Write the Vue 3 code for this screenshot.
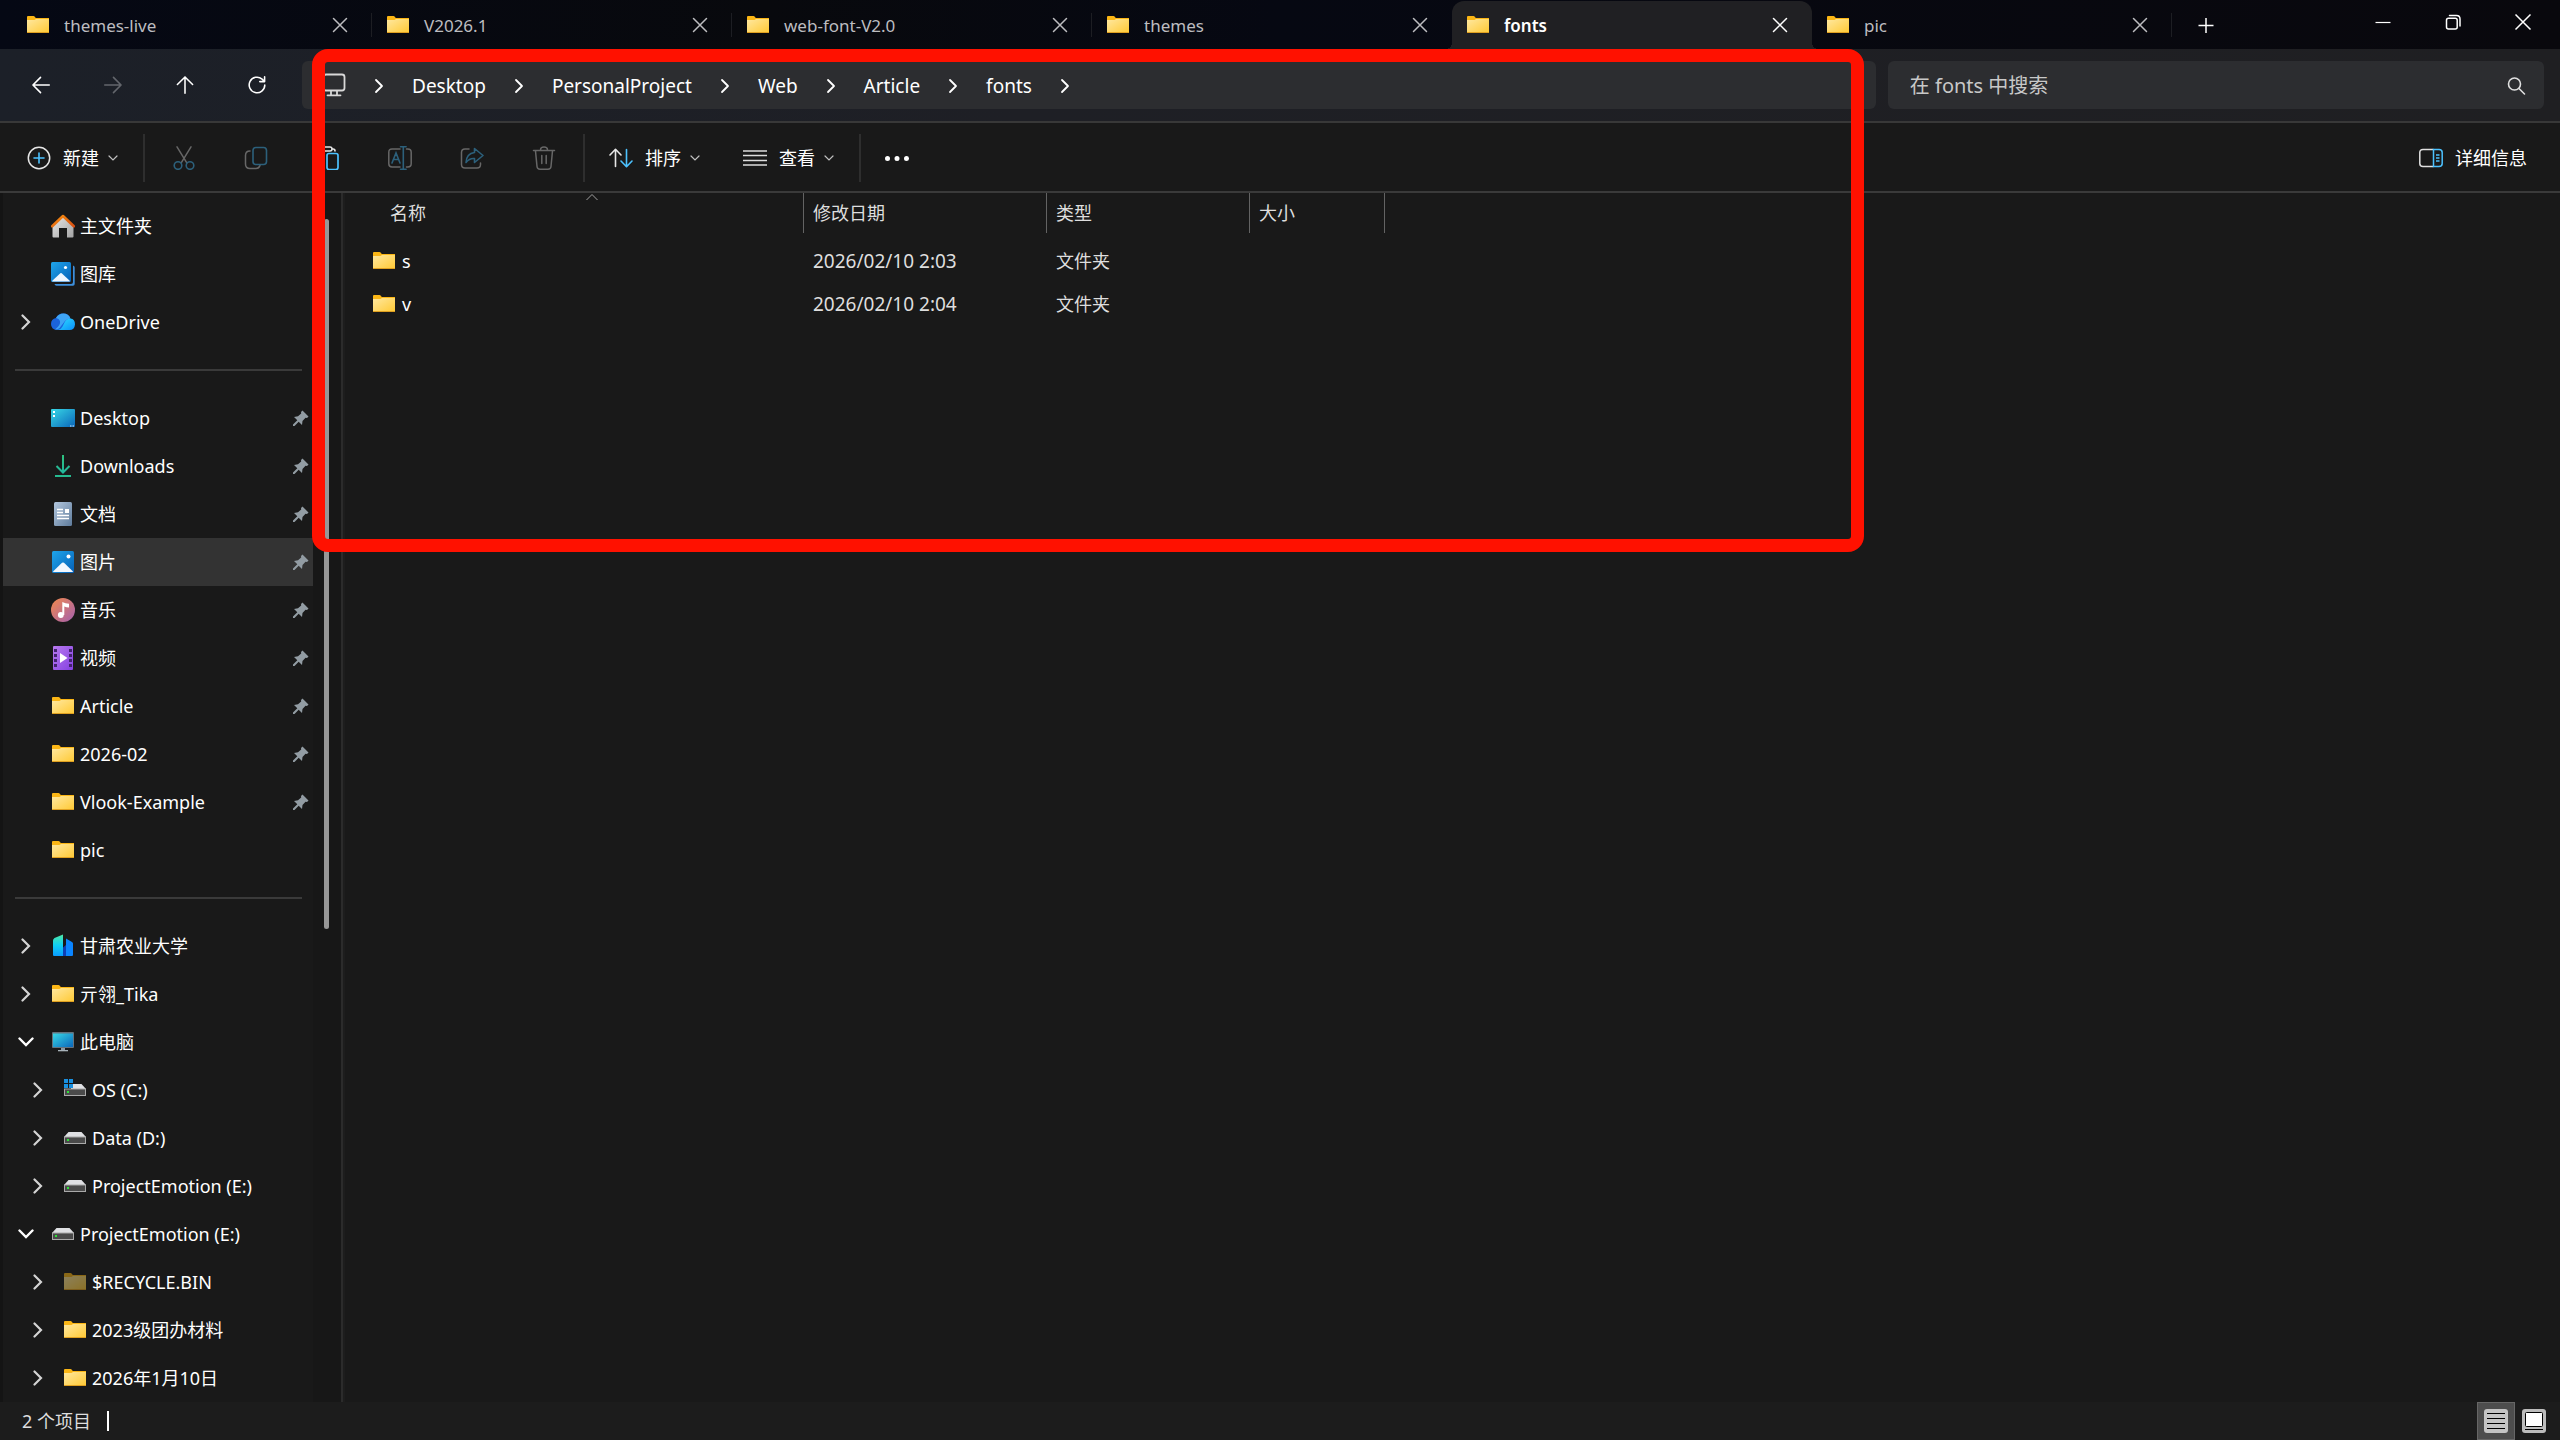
<script setup>
    import { ref } from 'vue';

    const tabs = ref([
        { id: 1, title: 'themes-live' },
        { id: 2, title: 'V2026.1' },
        { id: 3, title: 'web-font-V2.0' },
        { id: 4, title: 'themes' },
        { id: 5, title: 'fonts' },
        { id: 6, title: 'pic' }
    ]);
    const activeTab = ref(5);

    const navButtons = [
        { icon: 'back', label: '后退' },
        { icon: 'forward', label: '前进', disabled: true },
        { icon: 'up', label: '向上' },
        { icon: 'refresh', label: '刷新' }
    ];

    const windowButtons = [
        { icon: 'minimize', label: '最小化' },
        { icon: 'restore', label: '还原' },
        { icon: 'window-close', label: '关闭' }
    ];

    const crumbs = ['Desktop', 'PersonalProject', 'Web', 'Article', 'fonts'];

    const fileActions = [
        { icon: 'cut', label: '剪切', disabled: true },
        { icon: 'copy', label: '复制', disabled: true },
        { icon: 'paste', label: '粘贴', disabled: false },
        { icon: 'rename', label: '重命名', disabled: true },
        { icon: 'share', label: '共享', disabled: true },
        { icon: 'trash', label: '删除', disabled: true }
    ];

    const sections = [
        [
            { name: '主文件夹', icon: 'home' },
            { name: '图库', icon: 'gallery' },
            { name: 'OneDrive', icon: 'cloud', arrow: 'right' }
        ],
        [
            { name: 'Desktop', icon: 'desktop', pinned: true },
            { name: 'Downloads', icon: 'download', pinned: true },
            { name: '文档', icon: 'document', pinned: true },
            { name: '图片', icon: 'picture', pinned: true, selected: true },
            { name: '音乐', icon: 'music', pinned: true },
            { name: '视频', icon: 'video', pinned: true },
            { name: 'Article', icon: 'folder', pinned: true },
            { name: '2026-02', icon: 'folder', pinned: true },
            { name: 'Vlook-Example', icon: 'folder', pinned: true },
            { name: 'pic', icon: 'folder' }
        ],
        [
            { name: '甘肃农业大学', icon: 'building', arrow: 'right' },
            { name: '亓翎_Tika', icon: 'folder', arrow: 'right' },
            { name: '此电脑', icon: 'computer', arrow: 'down' },
            { name: 'OS (C:)', icon: 'drive-os', arrow: 'right', nested: true },
            { name: 'Data (D:)', icon: 'drive', arrow: 'right', nested: true },
            { name: 'ProjectEmotion (E:)', icon: 'drive', arrow: 'right', nested: true },
            { name: 'ProjectEmotion (E:)', icon: 'drive', arrow: 'down' },
            { name: '$RECYCLE.BIN', icon: 'folder', arrow: 'right', nested: true, hidden: true },
            { name: '2023级团办材料', icon: 'folder', arrow: 'right', nested: true },
            { name: '2026年1月10日', icon: 'folder', arrow: 'right', nested: true }
        ]
    ];

    const files = [
        { name: 's', date: '2026/02/10 2:03', type: '文件夹', size: '' },
        { name: 'v', date: '2026/02/10 2:04', type: '文件夹', size: '' }
    ];

    const search = ref('');

    function closeTab(id) {
        tabs.value = tabs.value.filter(tab => tab.id !== id);
    }
</script>

<template>
    <!-- icon sprite -->
    <svg class="sprite" aria-hidden="true">
        <defs>
            <linearGradient id="g-folder" x1="0" y1="0" x2="1" y2="1"><stop offset="0" stop-color="#ffe8a0" /><stop offset="1" stop-color="#ffc933" /></linearGradient>
            <linearGradient id="g-roof" x1="0" y1="0" x2="1" y2="1"><stop offset="0" stop-color="#f7900f" /><stop offset="1" stop-color="#d94f12" /></linearGradient>
            <linearGradient id="g-wall" x1="0" y1="0" x2="1" y2="1"><stop offset="0" stop-color="#e8e8e8" /><stop offset="1" stop-color="#a4a4a4" /></linearGradient>
            <linearGradient id="g-blue" x1="0" y1="0" x2="1" y2="1"><stop offset="0" stop-color="#1fa5ea" /><stop offset="1" stop-color="#0560b8" /></linearGradient>
            <linearGradient id="g-desk" x1="0" y1="0" x2="1" y2="1"><stop offset="0" stop-color="#38d8e6" /><stop offset="1" stop-color="#0a66ba" /></linearGradient>
            <linearGradient id="g-doc" x1="0" y1="0" x2="1" y2="1"><stop offset="0" stop-color="#b3c7de" /><stop offset="1" stop-color="#5e7b9b" /></linearGradient>
            <linearGradient id="g-music" x1="0" y1="0" x2="1" y2="1"><stop offset="0" stop-color="#f2894c" /><stop offset="1" stop-color="#a35fb0" /></linearGradient>
            <linearGradient id="g-video" x1="0" y1="0" x2="1" y2="1"><stop offset="0" stop-color="#b87af0" /><stop offset="1" stop-color="#8440e0" /></linearGradient>
            <linearGradient id="g-cloud" x1="0" y1="0" x2="1" y2="1"><stop offset="0" stop-color="#2fe0ff" /><stop offset="1" stop-color="#0a8dfa" /></linearGradient>
            <linearGradient id="g-build" x1="0" y1="0" x2="0" y2="1"><stop offset="0" stop-color="#4fe8a4" /><stop offset="0.5" stop-color="#0fd0f5" /><stop offset="1" stop-color="#0a9cff" /></linearGradient>
            <linearGradient id="g-down" x1="0" y1="0" x2="0" y2="24" gradientUnits="userSpaceOnUse"><stop offset="0" stop-color="#2fc27c" /><stop offset="1" stop-color="#1fb3a6" /></linearGradient>
        </defs>

        <symbol id="i-folder" viewBox="0 0 24 24">
            <path d="M1 4q0-1 1-1h5.500q.8 0 1.300.7L9.800 5H23v4H1z" fill="#fbb615" />
            <path d="M1 7h7.500L10 6h13v13.500q0 .5-.5.500h-21q-.5 0-.5-.5z" fill="url(#g-folder)" />
            <path d="M1 19.500h22" stroke="#e0a020" stroke-width="1" />
        </symbol>
        <symbol id="i-home" viewBox="0 0 24 24">
            <path d="M1.500 12 12 2l10.500 10v10.500q0 1-1 1H16V14H8v9.500H2.500q-1 0-1-1z" fill="url(#g-wall)" />
            <path d="M1.200 12.300 12 2l10.800 10.300" fill="none" stroke="url(#g-roof)" stroke-width="2.600" stroke-linejoin="round" stroke-linecap="round" />
        </symbol>
        <symbol id="i-gallery" viewBox="0 0 24 24">
            <path d="M22 3.500q1.700.3 1.700 2V22q0 1.700-1.700 1.700H5.500q-1.700 0-2-1.700H20q2 0 2-2z" fill="#3d8fdc" />
            <rect width="20" height="20" rx="1.500" fill="url(#g-blue)" />
            <path d="m1 19 8.300-7.800q.7-.6 1.400 0L19 19q-.3.500-1 .5H2q-.7 0-1-.5z" fill="#eef6ff" />
            <circle cx="14.500" cy="5.500" r="1.600" fill="#fff" />
        </symbol>
        <symbol id="i-cloud" viewBox="0 0 24 24">
            <path d="M6 20q-6-.5-6-6 0-5 5-6 2-4.500 7-4.500 5.500 0 7.500 5L9 20z" fill="#1b63dc" />
            <path d="M5 8q2.500-4.500 7.500-4.500 5 0 7 5-3.500 0-5.500 2.500L8.500 18Q6 20 4 19.500 10 15 9 11 8 8.500 5 8z" fill="#3ea4f5" />
            <path d="M7 20q3-.5 4.500-3.500l2-4q2-4 6-4 4.500.5 4.500 6-.5 5.500-5.500 5.500z" fill="url(#g-cloud)" />
        </symbol>
        <symbol id="i-desktop" viewBox="0 0 24 24">
            <rect y="3" width="24" height="18" rx="1" fill="url(#g-desk)" />
            <path d="M2 5h2v2H2zm0 4h2v2H2z" fill="#fff" />
            <path d="M19 20h1.500m1 0H23" stroke="#d6e8ff" />
        </symbol>
        <symbol id="i-download" viewBox="0 0 24 24">
            <path d="M12 1v17M5.500 12 12 18.500 18.500 12" fill="none" stroke="url(#g-down)" stroke-width="2" />
            <path d="M4 21h16v2H4z" fill="#25bb90" />
        </symbol>
        <symbol id="i-document" viewBox="0 0 24 24">
            <rect x="3" width="18" height="24" rx="1.500" fill="url(#g-doc)" />
            <path d="M6 7.500h6M6 10.500h6M6 13.500h12M6 16.500h12" stroke="#fff" stroke-width="1.300" />
            <path d="M14 7h4v4h-4z" fill="#fff" />
        </symbol>
        <symbol id="i-picture" viewBox="0 0 24 24">
            <rect x="1" y="1" width="22" height="22" rx="1.500" fill="url(#g-blue)" />
            <path d="m2 21.500 9-8.700q1-.8 2 0l9 8.700q-.3.600-1 .6H3q-.7 0-1-.6z" fill="#f2f8ff" />
            <circle cx="17.500" cy="6.500" r="2" fill="#fff" />
        </symbol>
        <symbol id="i-music" viewBox="0 0 24 24">
            <circle cx="12" cy="12" r="12" fill="url(#g-music)" />
            <circle cx="9.800" cy="17" r="2.900" fill="#fff" />
            <path d="M11.300 4q3.200 1.500 6.700 1.700V9.500q-2.500 0-4.700-1V17h-2z" fill="#fff" />
        </symbol>
        <symbol id="i-video" viewBox="0 0 24 24">
            <rect x="2" width="20" height="24" rx="1" fill="url(#g-video)" />
            <path d="M3 3h3v3H3zm0 5h3v3H3zm0 5h3v3H3zm0 5h3v3H3zM18 3h3v3h-3zm0 5h3v3h-3zm0 5h3v3h-3zm0 5h3v3h-3z" fill="#43236e" />
            <path d="M9 7v10l7.500-5z" fill="#fff" />
        </symbol>
        <symbol id="i-building" viewBox="0 0 24 24">
            <path d="M12 13.500 15 11v11h-3z" fill="#0c3fb5" />
            <path d="M15 4.500 21 8q1 .5 1 1.500V21q0 1-1 1h-6z" fill="#0a84ff" />
            <path d="M2 6.500Q2 5 3.500 4L12 .5V22H3q-1 0-1-1z" fill="url(#g-build)" />
        </symbol>
        <symbol id="i-computer" viewBox="0 0 24 24">
            <rect x="1" y="2" width="22" height="16" rx="1" fill="#65727c" />
            <rect x="2" y="3.500" width="20" height="13.500" fill="url(#g-desk)" />
            <path d="M10 18h4v2h-4z" fill="#8b98a2" />
            <path d="M7 20h10v1.300H7z" fill="#a8b3ba" />
        </symbol>
        <symbol id="i-drive" viewBox="0 0 24 24">
            <path d="M5.500 6h13L23 11H1z" fill="#dfe0e3" />
            <rect x="1" y="10.500" width="22" height="7.500" fill="#a9a9a9" />
            <rect x="2" y="11.500" width="20" height="5.500" fill="#4a4a4a" />
            <path d="M4 13h2v2H4z" fill="#2ce336" />
        </symbol>
        <symbol id="i-drive-os" viewBox="0 0 24 24">
            <path d="M8 6h10.500L23 11H8z" fill="#dfe0e3" />
            <rect x="1" y="10.500" width="22" height="7.500" fill="#a9a9a9" />
            <rect x="2" y="11.500" width="20" height="5.500" fill="#4a4a4a" />
            <path d="M4 13h2v2H4z" fill="#2ce336" />
            <path d="M1 1h4v4H1zm5 0h4v4H6zM1 6h4v4H1zm5 0h4v4H6z" fill="#1990e0" />
        </symbol>
        <symbol id="i-pin" viewBox="0 0 16 16">
            <path d="M9.500.5 15.500 6.500 14 8l-1.500-.2L9.500 11l-.5 4-3.300-3.300L1.500 16 0 16v-1.500l4.300-4.200L1 7l4-.7L8.200 3.500 8 2z" fill="#929ca3" />
        </symbol>

        <symbol id="i-right" viewBox="0 0 16 16"><path d="m4.500 1.500 6.500 6.500-6.500 6.500" fill="none" stroke="currentColor" stroke-width="2.200" stroke-linecap="round" /></symbol>
        <symbol id="i-down" viewBox="0 0 16 16"><path d="m1.500 4.500 6.500 6.500 6.500-6.500" fill="none" stroke="currentColor" stroke-width="2.400" stroke-linecap="round" /></symbol>
        <symbol id="i-crumb" viewBox="0 0 24 24"><path d="m9 7 6 6-6 6" fill="none" stroke="currentColor" stroke-width="1.800" stroke-linecap="round" stroke-linejoin="round" /></symbol>
        <symbol id="i-chevron" viewBox="0 0 12 12"><path d="m2 4 4 4 4-4" fill="none" stroke="currentColor" stroke-width="1.200" stroke-linecap="round" /></symbol>
        <symbol id="i-sorted" viewBox="0 0 12 8"><path d="m.5 7 5.500-5.500 5.500 5.500" fill="none" stroke="currentColor" /></symbol>

        <symbol id="i-close" viewBox="0 0 24 24"><path d="m5.500 5.500 13 13m0-13-13 13" stroke="currentColor" stroke-width="1.500" stroke-linecap="round" /></symbol>
        <symbol id="i-add" viewBox="0 0 24 24"><path d="M12 5v15M4.500 12.500h15" stroke="currentColor" stroke-width="1.500" /></symbol>
        <symbol id="i-minimize" viewBox="0 0 24 24"><path d="M4.500 12.500h15" stroke="currentColor" stroke-width="1.200" /></symbol>
        <symbol id="i-restore" viewBox="0 0 24 24"><path d="M7.500 8.300h6.700q2 0 2 2v6.700q0 2-2 2H7.500q-2 0-2-2v-6.700q0-2 2-2zM8.500 5.500h7q3.500 0 3.500 3.500v7" fill="none" stroke="currentColor" stroke-width="1.500" stroke-linecap="round" /></symbol>
        <symbol id="i-window-close" viewBox="0 0 24 24"><path d="m4.500 4.500 15 15m0-15-15 15" stroke="currentColor" stroke-width="1.500" /></symbol>

        <symbol id="i-back" viewBox="0 0 24 24"><path d="M21 12H3.500m8-8.300L3.200 12l8.300 8.300" fill="none" stroke="currentColor" stroke-width="1.700" stroke-linecap="round" stroke-linejoin="round" /></symbol>
        <symbol id="i-forward" viewBox="0 0 24 24"><path d="M3 12h17.500m-8-8.300 8.300 8.300-8.300 8.300" fill="none" stroke="currentColor" stroke-width="1.700" stroke-linecap="round" stroke-linejoin="round" /></symbol>
        <symbol id="i-up" viewBox="0 0 24 24"><path d="M12 21V3.500m-8.300 8L12 3.200l8.300 8.300" fill="none" stroke="currentColor" stroke-width="1.700" stroke-linecap="round" stroke-linejoin="round" /></symbol>
        <symbol id="i-refresh" viewBox="0 0 24 24"><path d="M20.500 12a8.500 8.500 0 1 1-3-6.500l2.500 2.500M20.300 3v5.300H15" fill="none" stroke="currentColor" stroke-width="1.700" stroke-linecap="round" stroke-linejoin="round" /></symbol>
        <symbol id="i-monitor" viewBox="0 0 24 24"><path d="M4 1.500h16q2.500 0 2.500 2.500v11q0 2.500-2.500 2.500H4q-2.500 0-2.500-2.500V4q0-2.500 2.500-2.500zM9 18v4m6-4v4M5.500 22.300h13" fill="none" stroke="currentColor" stroke-width="1.800" stroke-linecap="round" /></symbol>
        <symbol id="i-search" viewBox="0 0 24 24"><path d="M16.500 11a6 6 0 1 1-12 0 6 6 0 1 1 12 0zM15 15.500l5.500 5.500" fill="none" stroke="currentColor" stroke-width="1.600" stroke-linecap="round" /></symbol>

        <symbol id="i-new" viewBox="0 0 24 24">
            <circle cx="12" cy="12" r="10.700" fill="none" stroke="#e6e6e6" stroke-width="1.500" />
            <path d="M12 7v10M7 12h10" stroke="#4cc2ff" stroke-width="1.600" stroke-linecap="round" />
        </symbol>
        <symbol id="i-cut" viewBox="0 0 24 24">
            <path d="m5 .8 9.800 16M19 .8 9.200 16.800" fill="none" stroke="#676767" stroke-width="1.500" stroke-linecap="round" />
            <path d="M9.800 19.500a3.800 3.800 0 1 1-7.600 0 3.800 3.800 0 1 1 7.600 0zm12 0a3.800 3.800 0 1 1-7.600 0 3.800 3.800 0 1 1 7.600 0z" fill="none" stroke="#2c607b" stroke-width="1.600" />
        </symbol>
        <symbol id="i-copy" viewBox="0 0 24 24">
            <path d="M6 5Q1.500 5 1.500 9.500V18q0 4.500 4.500 4.500h6q3 0 4-3" fill="none" stroke="#676767" stroke-width="1.500" stroke-linecap="round" />
            <rect x="9" y="1.500" width="13.500" height="17" rx="3" fill="none" stroke="#2c607b" stroke-width="1.600" />
        </symbol>
        <symbol id="i-paste" viewBox="0 0 24 24">
            <path d="M7 3H4Q2 3 2 5v15q0 2 2 2h4M16 3h1q2 0 2 2" fill="none" stroke="#e6e6e6" stroke-width="1.600" stroke-linecap="round" />
            <rect x="7" y="1" width="9" height="4" rx="2" fill="none" stroke="#e6e6e6" stroke-width="1.500" />
            <rect x="11" y="7.500" width="11" height="16" rx="2" fill="none" stroke="#4cc2ff" stroke-width="1.700" />
        </symbol>
        <symbol id="i-rename" viewBox="0 0 24 24">
            <path d="M12 3H4Q.8 3 .8 6.200v11.600Q.8 21 4 21h8M18.500 3h1.300q3.400 0 3.400 3.200v11.600q0 3.200-3.400 3.200h-1.300" fill="none" stroke="#676767" stroke-width="1.500" stroke-linecap="round" />
            <path d="M15.300 1v22M12.500.8h5.600M12.500 23.200h5.600M4 17 8 7l4 10M5.300 13.500h5.400" fill="none" stroke="#2c607b" stroke-width="1.600" stroke-linecap="round" />
        </symbol>
        <symbol id="i-share" viewBox="0 0 24 24">
            <path d="M9 3H5Q1.500 3 1.500 6.500v12Q1.500 22 5 22h12q3.500 0 3.500-3.500V17" fill="none" stroke="#676767" stroke-width="1.500" stroke-linecap="round" />
            <path d="M14.500 2.500 23 9.500l-8.500 7V12.500q-5-.5-8.500 4Q6.500 7.500 14.500 6.500z" fill="none" stroke="#2c607b" stroke-width="1.600" stroke-linejoin="round" />
        </symbol>
        <symbol id="i-trash" viewBox="0 0 24 24">
            <path d="M1.500 4.500h21M8.500 4q0-3 3.500-3t3.500 3M3.500 5l1.500 15.500q.3 2.700 3 2.700h8q2.700 0 3-2.700L20.500 5M9.800 9.500v8m4.400-8v8" fill="none" stroke="#676767" stroke-width="1.500" stroke-linecap="round" />
        </symbol>
        <symbol id="i-sort" viewBox="0 0 24 24">
            <path d="M6.500 20.500V3.500M1 9l5.500-5.700L12 9" fill="none" stroke="#e6e6e6" stroke-width="1.600" stroke-linecap="round" stroke-linejoin="round" />
            <path d="M17.500 3.500v17M12 15l5.500 5.700L23 15" fill="none" stroke="#4cc2ff" stroke-width="1.600" stroke-linecap="round" stroke-linejoin="round" />
        </symbol>
        <symbol id="i-view" viewBox="0 0 24 24"><path d="M0 5h24M0 9.500h24M0 14.500h24M0 19h24" stroke="#dcdcdc" stroke-width="1.400" /></symbol>
        <symbol id="i-more" viewBox="0 0 24 24"><path d="M2.500 12.500h.01M12 12.500h.01M21.500 12.500h.01" stroke="#fff" stroke-width="5" stroke-linecap="round" /></symbol>
        <symbol id="i-details" viewBox="0 0 24 24">
            <path d="M14.500 3.500H4Q.8 3.500.8 6.500v11q0 3 3.200 3h10.500" fill="none" stroke="#e0e0e0" stroke-width="1.500" />
            <path d="M14.500 3.500H20q3.200 0 3.200 3v11q0 3-3.200 3h-5.500zM17 9h3.500M17 12h3.500M17 15h3.500" fill="none" stroke="#4cc2ff" stroke-width="1.500" />
        </symbol>
        <symbol id="i-list-mode" viewBox="0 0 24 24">
            <rect width="24" height="24" rx="3" fill="#c4c4c4" />
            <path d="M3 4.500h18M3 9.500h18M3 14.500h18M3 19.500h18" stroke="#000" />
        </symbol>
        <symbol id="i-thumb-mode" viewBox="0 0 24 24">
            <rect width="24" height="24" rx="3" fill="#bcbcbc" />
            <rect x="3.500" y="3.500" width="17" height="14" rx="1" fill="#fff" stroke="#000" />
            <path d="M3 20.500h18" stroke="#000" />
        </symbol>
    </svg>

    <div class="explorer">
        <header class="titlebar">
            <div v-for="tab in tabs" :key="tab.id" class="tab" :class="{ 'tab--active': tab.id === activeTab }">
                <button class="tab__select" @click="activeTab = tab.id">
                    <svg class="icon"><use href="#i-folder" /></svg>
                    <span>{{ tab.title }}</span>
                </button>
                <button class="tab__close" aria-label="关闭标签页" @click="closeTab(tab.id)">
                    <svg class="icon"><use href="#i-close" /></svg>
                </button>
            </div>
            <button class="titlebar__add" aria-label="添加新标签页">
                <svg class="icon"><use href="#i-add" /></svg>
            </button>
            <div class="window-buttons">
                <button v-for="item in windowButtons" :key="item.icon" :aria-label="item.label">
                    <svg class="icon"><use :href="'#i-' + item.icon" /></svg>
                </button>
            </div>
        </header>

        <div class="navbar">
            <div class="navbar__buttons">
                <button v-for="item in navButtons" :key="item.icon" :aria-label="item.label" :disabled="item.disabled">
                    <svg class="icon icon--nav"><use :href="'#i-' + item.icon" /></svg>
                </button>
            </div>
            <nav class="address">
                <svg class="icon address__root"><use href="#i-monitor" /></svg>
                <svg class="icon"><use href="#i-crumb" /></svg>
                <template v-for="crumb in crumbs" :key="crumb">
                    <a href="#">{{ crumb }}</a>
                    <svg class="icon"><use href="#i-crumb" /></svg>
                </template>
            </nav>
            <label class="search">
                <input v-model="search" type="text" placeholder="在 fonts 中搜索" aria-label="搜索">
                <svg class="icon"><use href="#i-search" /></svg>
            </label>
        </div>

        <div class="toolbar">
            <button class="toolbar__button">
                <svg class="icon"><use href="#i-new" /></svg>
                <span>新建</span>
                <svg class="chevron"><use href="#i-chevron" /></svg>
            </button>
            <i class="toolbar__line"></i>
            <button v-for="item in fileActions" :key="item.icon" class="toolbar__icon" :aria-label="item.label" :disabled="item.disabled">
                <svg class="icon"><use :href="'#i-' + item.icon" /></svg>
            </button>
            <i class="toolbar__line"></i>
            <button class="toolbar__button">
                <svg class="icon"><use href="#i-sort" /></svg>
                <span>排序</span>
                <svg class="chevron"><use href="#i-chevron" /></svg>
            </button>
            <button class="toolbar__button">
                <svg class="icon"><use href="#i-view" /></svg>
                <span>查看</span>
                <svg class="chevron"><use href="#i-chevron" /></svg>
            </button>
            <i class="toolbar__line"></i>
            <button class="toolbar__button" aria-label="查看更多">
                <svg class="icon"><use href="#i-more" /></svg>
            </button>
            <button class="toolbar__button toolbar__button--details">
                <svg class="icon"><use href="#i-details" /></svg>
                <span>详细信息</span>
            </button>
        </div>

        <div class="content">
            <aside class="sidebar">
                <nav class="tree">
                    <ul v-for="(section, index) in sections" :key="index" class="tree__section">
                        <li v-for="item in section" :key="item.name + item.nested">
                            <a href="#" class="tree__item" :class="{ 'tree__item--selected': item.selected, 'tree__item--nested': item.nested }">
                                <svg class="tree__arrow" :class="{ 'tree__arrow--open': item.arrow === 'down' }">
                                    <use v-if="item.arrow" :href="'#i-' + item.arrow" />
                                </svg>
                                <svg class="icon" :class="{ 'icon--faded': item.hidden }"><use :href="'#i-' + item.icon" /></svg>
                                <span class="tree__name">{{ item.name }}</span>
                                <svg v-if="item.pinned" class="tree__pin"><use href="#i-pin" /></svg>
                            </a>
                        </li>
                    </ul>
                </nav>
                <div class="scrollbar"><div class="scrollbar__thumb"></div></div>
            </aside>

            <main class="files">
                <table>
                    <colgroup>
                        <col class="col-name">
                        <col class="col-date">
                        <col class="col-type">
                        <col class="col-size">
                    </colgroup>
                    <thead>
                        <tr>
                            <th>
                                <div class="head head--name">
                                    名称
                                    <svg class="head__sorted"><use href="#i-sorted" /></svg>
                                </div>
                            </th>
                            <th><div class="head">修改日期</div></th>
                            <th><div class="head">类型</div></th>
                            <th><div class="head">大小</div></th>
                        </tr>
                    </thead>
                    <tbody>
                        <tr v-for="file in files" :key="file.name">
                            <td>
                                <div class="file">
                                    <svg class="icon"><use href="#i-folder" /></svg>
                                    <span>{{ file.name }}</span>
                                </div>
                            </td>
                            <td class="files__date">{{ file.date }}</td>
                            <td>{{ file.type }}</td>
                            <td>{{ file.size }}</td>
                        </tr>
                    </tbody>
                </table>
            </main>
        </div>

        <footer class="status">
            <span>2 个项目</span>
            <i class="status__line"></i>
            <div class="status__modes">
                <button class="status__mode status__mode--active" aria-label="详细信息视图">
                    <svg class="icon"><use href="#i-list-mode" /></svg>
                </button>
                <button class="status__mode" aria-label="大缩略图视图">
                    <svg class="icon"><use href="#i-thumb-mode" /></svg>
                </button>
            </div>
        </footer>

        <div class="marker"></div>
    </div>
</template>

<style>
    body {
        background: #191919;
    }
</style>

<style scoped>
    .sprite {
        position: absolute;
        width: 0;
        height: 0;
    }

    .explorer {
        position: relative;
        display: flex;
        flex-direction: column;
        min-height: 100vh;
        background: #191919;
        color: #fff;
        font: 18px/24px 'Noto Sans', 'Noto Sans CJK SC', sans-serif;
    }

    button {
        display: flex;
        align-items: center;
        justify-content: center;
        padding: 0;
        border: 0;
        background: none;
        color: inherit;
        font: inherit;
    }

    a {
        color: inherit;
        text-decoration: none;
    }

    svg {
        flex: none;
        display: block;
    }

    .icon {
        width: 24px;
        height: 24px;
    }

    .icon--nav {
        width: 22px;
        height: 22px;
    }

    .icon--faded {
        opacity: 0.5;
    }

    .chevron {
        width: 12px;
        height: 12px;
        color: #c0c0c0;
    }

    /* title bar */
    .titlebar {
        display: flex;
        height: 49px;
        padding: 0 2px 0 12px;
        background: linear-gradient(90deg, #050814, #08090d 30%, #060812 50%, #09080d);
    }

    .tab {
        position: relative;
        display: flex;
        flex: 0 1 360px;
        box-sizing: border-box;
        margin-top: 1px;
        padding: 0 20px 0 14px;
        color: #bdbdc0;
        font-size: 17px;
    }

    .tab::after {
        content: '';
        align-self: center;
        position: absolute;
        right: 0;
        width: 1px;
        height: 24px;
        background: #1d1e23;
    }

    .tab:has(+ .tab--active)::after {
        display: none;
    }

    .tab--active {
        border-radius: 12px 12px 0 0;
        background: #202023;
        color: #fff;
        font-weight: 600;
    }

    /* flared feet of the active tab */
    .tab--active::before,
    .tab--active::after {
        content: '';
        position: absolute;
        bottom: 0;
        width: 6px;
        height: 6px;
    }

    .tab--active::before {
        right: 100%;
        background: radial-gradient(circle at 0 0, transparent 6px, #202023 6px);
    }

    .tab--active::after {
        right: auto;
        left: 100%;
        align-self: auto;
        background: radial-gradient(circle at 100% 0, transparent 6px, #202023 6px);
    }

    .tab__select {
        flex: 1;
        justify-content: flex-start;
        gap: 14px;
        min-width: 0;
    }

    .tab__select span {
        padding-top: 2px;
    }

    .titlebar__add {
        width: 68px;
    }

    .window-buttons {
        display: flex;
        margin-left: auto;
        height: 43px;
    }

    .window-buttons button {
        width: 70px;
    }

    /* navigation */
    .navbar {
        display: grid;
        grid-template-columns: auto 29fr 12fr;
        align-items: center;
        height: 72px;
        padding: 0 16px 0 5px;
        border-bottom: 2px solid #383838;
        background: linear-gradient(90deg, #1c2028, #1e1f25 40%, #1f1f22);
    }

    .navbar__buttons {
        display: flex;
        margin-right: 9px;
    }

    .navbar__buttons button {
        width: 72px;
        height: 48px;
    }

    .navbar__buttons button:disabled {
        color: #63666c;
    }

    .address,
    .search {
        display: flex;
        align-items: center;
        box-sizing: border-box;
        min-width: 0;
        height: 48px;
        border-radius: 6px;
        background: #2c2d30;
    }

    .address {
        gap: 21px;
        margin-right: 12px;
        padding-left: 20px;
        font-size: 19px;
    }

    .address a {
        padding-top: 2px;
    }

    .address__root {
        color: #d8d8d8;
    }

    .search {
        padding: 0 16px 0 22px;
        color: #e0e0e0;
    }

    .search input {
        flex: 1;
        min-width: 0;
        padding: 2px 0 0;
        border: 0;
        outline: 0;
        background: none;
        color: #fff;
        font: inherit;
        font-size: 20px;
    }

    .search input::placeholder {
        color: #c8c8c8;
        opacity: 1;
    }

    /* toolbar */
    .toolbar {
        display: flex;
        align-items: center;
        box-sizing: border-box;
        height: 70px;
        padding: 2px 12px 0 6px;
        border-bottom: 2px solid #3a3a3a;
    }

    .toolbar__button {
        gap: 12px;
        height: 48px;
        padding: 0 21px;
    }

    .toolbar__button .chevron {
        margin-left: -4px;
    }

    .toolbar__button--details {
        margin-left: auto;
    }

    .toolbar__icon {
        width: 72px;
        height: 48px;
    }

    .toolbar__line {
        width: 2px;
        height: 48px;
        margin: 0 3px;
        background: #2e2e2e;
    }

    /* sidebar */
    .content {
        display: flex;
        flex: 1;
    }

    .sidebar {
        display: flex;
        flex: none;
        box-sizing: border-box;
        width: 345px;
        border-left: 3px solid #141414;
        border-right: 2px solid #1d1d1d;
    }

    .tree {
        width: 310px;
        padding-top: 9px;
    }

    .tree__section {
        margin: 0;
        padding: 0;
        list-style: none;
    }

    .tree__section + .tree__section::before {
        content: '';
        display: block;
        height: 2px;
        margin: 23px 11px 23px 12px;
        background: #3a3a3a;
    }

    .tree__item {
        display: flex;
        align-items: center;
        height: 48px;
        padding: 0 4px 0 15px;
    }

    .tree__item--nested {
        padding-left: 27px;
    }

    .tree__item--selected {
        background: #333;
    }

    .tree__arrow {
        width: 16px;
        height: 16px;
        margin-right: 17px;
        color: #d4d4d4;
    }

    .tree__arrow--open {
        color: #fff;
    }

    .tree__name {
        flex: 1;
        margin-left: 5px;
        white-space: nowrap;
    }

    .tree__pin {
        width: 16px;
        height: 16px;
    }

    .scrollbar {
        flex: 1;
        padding: 26px 12px 0 11px;
        border-right: 2px solid #2b2b2b;
        background: #171717;
    }

    .scrollbar__thumb {
        height: 60%;
        border-radius: 3px;
        background: #979797;
    }

    /* file list */
    .files {
        flex: 1;
        min-width: 0;
        color: #dedede;
    }

    table {
        table-layout: fixed;
        width: 1040px;
        border-collapse: collapse;
    }

    .col-name {
        width: 459px;
    }

    .col-date {
        width: 243px;
    }

    .col-type {
        width: 203px;
    }

    .col-size {
        width: 135px;
    }

    th {
        padding: 0 0 6px;
        font-weight: 400;
        text-align: left;
    }

    .head {
        position: relative;
        box-sizing: border-box;
        height: 40px;
        padding-left: 9px;
        border-right: 1px solid #636363;
        line-height: 40px;
    }

    .head--name {
        margin-left: 36px;
    }

    .head__sorted {
        position: absolute;
        top: 0;
        left: 50%;
        width: 12px;
        height: 8px;
        margin-left: -6px;
        color: #a0a0a0;
    }

    td {
        height: 43px;
        padding: 0 0 0 9px;
    }

    .files__date {
        font-size: 19px;
    }

    .file {
        display: flex;
        align-items: center;
        gap: 6px;
        margin-left: 18px;
        color: #fff;
    }

    /* status bar */
    .status {
        display: flex;
        align-items: center;
        height: 38px;
        padding: 0 7px 0 22px;
        background: #1c1c1c;
        color: #dedede;
    }

    .status__line {
        width: 2px;
        height: 20px;
        margin-left: 16px;
        background: #fff;
    }

    .status__modes {
        display: flex;
        margin-left: auto;
    }

    .status__mode {
        box-sizing: border-box;
        width: 38px;
        height: 38px;
    }

    .status__mode--active {
        border: 1px solid #666;
        background: #4d4d4d;
    }

    /* red outline drawn over the window */
    .marker {
        position: absolute;
        top: 49px;
        left: 312px;
        box-sizing: border-box;
        width: 1552px;
        height: 503px;
        border: 13px solid #ff1100;
        border-radius: 16px;
        pointer-events: none;
    }
</style>
